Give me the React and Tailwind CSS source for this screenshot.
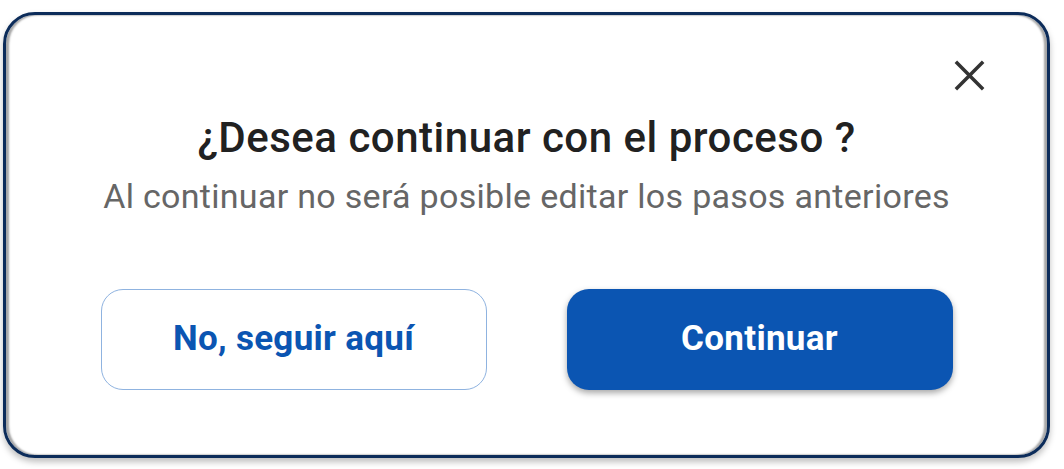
export default function App() {
  return (
    <div className="w-[1064px] h-[469px] bg-white pt-[12px] pl-[3px]" style={{ fontFamily: "Roboto, 'Noto Sans', sans-serif" }}>
      {/* DIALOG */}
      <div className="relative w-[1047px] h-[446px] rounded-[32px] border-[3px] border-[#0c2c5a] bg-white shadow-[inset_3px_0_2px_rgba(0,0,0,0.35),inset_-3px_0_2px_rgba(0,0,0,0.35),0_4px_6px_rgba(0,0,0,0.25)] flex flex-col items-center">
        {/* CLOSE */}
        <button className="absolute right-[62px] top-[45px] w-[31px] h-[31px] flex items-center justify-center text-[#333]">
          <svg width="31" height="31" viewBox="0 0 30 30" fill="none" stroke="currentColor" strokeWidth="3.4" strokeLinecap="square">
            <path d="M3 3L27 27M27 3L3 27" />
          </svg>
        </button>

        {/* TEXT */}
        <h1 className="mt-[99px] text-[42px] leading-[48px] font-medium text-[#212121] tracking-[0.5px]">
          ¿Desea continuar con el proceso ?
        </h1>
        <p className="mt-[14px] text-[34px] leading-[40px] text-[#666] tracking-[0.3px]">
          Al continuar no será posible editar los pasos anteriores
        </p>

        {/* BUTTONS */}
        <div className="mt-[73px] flex gap-[80px]">
          <button className="w-[386px] h-[101px] rounded-[22px] border border-[#8fb3e0] bg-white text-[#0b55b2] text-[35px] font-bold tracking-[0.3px]">
            No, seguir aquí
          </button>
          <button className="w-[386px] h-[101px] rounded-[22px] bg-[#0b55b2] text-white text-[35px] font-bold tracking-[0.3px] shadow-[0_3px_6px_rgba(0,0,0,0.35)]">
            Continuar
          </button>
        </div>
      </div>
    </div>
  );
}
